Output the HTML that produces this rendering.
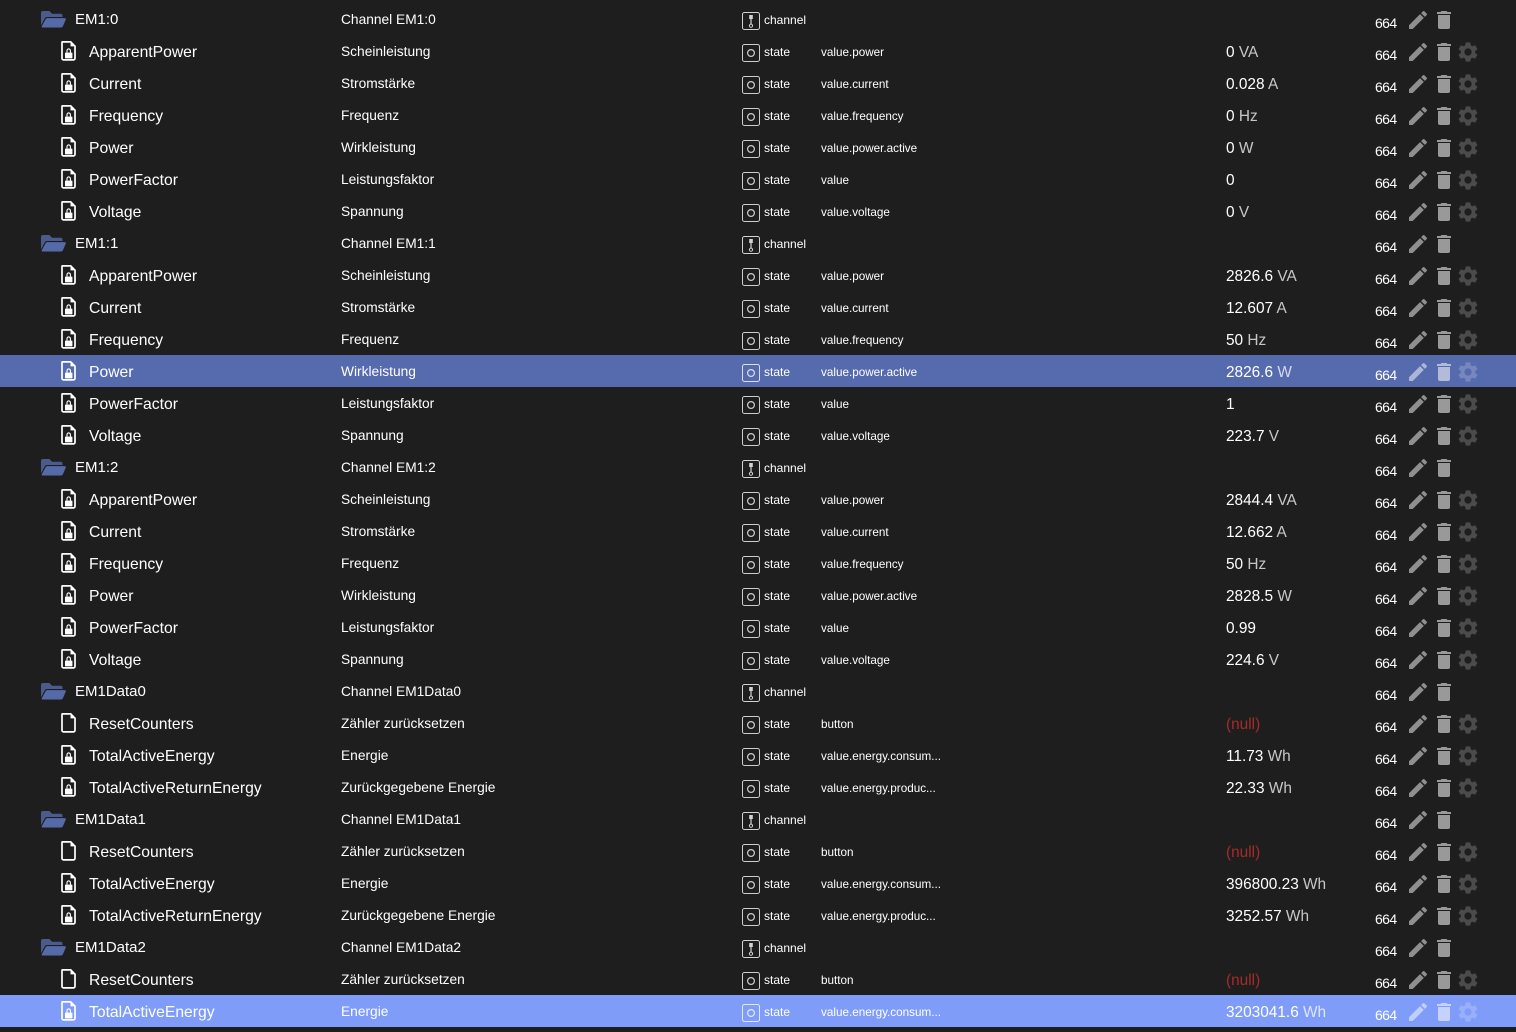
<!DOCTYPE html>
<html><head><meta charset="utf-8"><style>
html,body{margin:0;padding:0;background:#1e1e1e;width:1516px;height:1032px;overflow:hidden}
body{font-family:"Liberation Sans",sans-serif;color:#fff;position:relative}
#w{position:absolute;left:0;top:3px;width:1516px}
.r{position:relative;height:32px;width:1516px}
.r span{position:absolute;white-space:nowrap;line-height:32px;top:0}
.r svg{position:absolute;overflow:visible}
.n{left:89px;font-size:15.7px;top:2px!important}
.c .n{left:75px;font-size:15px;top:1px!important}
.d{left:341px;font-size:13.75px;top:1px!important}
.y{left:764px;font-size:12px;top:1px!important}
.o{left:821px;font-size:11.7px;top:2px!important}
.v{left:1226px;font-size:15.4px;top:2px!important}
.v i{font-style:normal;opacity:.75}
.v.z{color:#a82a2a}
.m{left:1375px;font-size:14px;letter-spacing:-.6px;top:4px!important}
.f{left:59px;top:4px;width:20px;height:22px}
.g{left:41px;top:8px;width:25px;height:16px}
.t{left:742px;top:9px;width:18px;height:18px}
.p{left:1406px;top:5px;width:24px;height:24px}
.x{left:1432px;top:5px;width:24px;height:24px}
.s{left:1456px;top:5px;width:24px;height:24px}
.s1{background:#566aae}
.s2{background:#7f9cf8}
</style></head><body>
<svg width="0" height="0" style="position:absolute"><defs>
<g id="lk" transform="translate(0,.4)"><path d="M3.5 2.5H11.7L16 6.8V19a1.5 1.5 0 0 1-1.5 1.5H4.5A1.5 1.5 0 0 1 3 19V3a.5.5 0 0 1 .5-.5Z" fill="none" stroke="#fff" stroke-width="1.7"/><path d="M11.5 2.5V7H16" fill="#fff"/><rect x="6" y="13.2" width="7.4" height="5.8" rx=".6" fill="#fff"/><path d="M8 13.5V11.2a1.7 1.7 0 0 1 3.4 0V13.5" fill="none" stroke="#fff" stroke-width="1.1"/></g>
<g id="fi" transform="translate(0,.4)"><path d="M3.5 2.5H11.7L16 6.8V19a1.5 1.5 0 0 1-1.5 1.5H4.5A1.5 1.5 0 0 1 3 19V3a.5.5 0 0 1 .5-.5Z" fill="none" stroke="#fff" stroke-width="1.7"/><path d="M11.5 2.5V7H16" fill="#fff"/></g>
<g id="fo" transform="scale(1,1.1)"><path d="M0 13V2Q0 0 2 0H8.5L11 2.5H19.5Q21.5 2.5 21.5 4.5V5.5H6Q4.3 5.5 3.6 7Z" fill="#4a5b90"/><path d="M6.5 6.5H23.5Q25.3 6.5 24.6 8.2L22 13.6Q21.3 15 19.8 15H1.5Q.3 15 .8 13.8L4.4 7.8Q5 6.5 6.5 6.5Z" fill="#566aa8"/></g>
<g id="ch" opacity=".8"><rect x=".5" y=".5" width="17" height="17" rx="2" fill="none" stroke="#fff"/><rect x="7.2" y="3" width="3.6" height="4" fill="#fff"/><rect x="8.4" y="7" width="1.2" height="5" fill="#fff"/><circle cx="9" cy="13.7" r="1.6" fill="none" stroke="#fff"/></g>
<g id="st" opacity=".78"><rect x=".5" y=".5" width="17" height="17" rx="2" fill="none" stroke="#fff"/><circle cx="9" cy="9" r="3.4" fill="none" stroke="#fff" stroke-width="1.2"/></g>
<path id="pe" fill="#fff" d="M20.71,7.04C21.1,6.65 21.1,6 20.71,5.63L18.37,3.29C18,2.9 17.35,2.9 16.96,3.29L15.12,5.12L18.87,8.87M3,17.25V21H6.75L17.81,9.93L14.06,6.18L3,17.25Z"/>
<path id="tr" fill="#fff" d="M19,4H15.5L14.5,3H9.5L8.5,4H5V6H19M6,19A2,2 0 0,0 8,21H16A2,2 0 0,0 18,19V7H6V19Z"/>
<path id="ge" fill="#fff" d="M19.14 12.94c.04-.3.06-.61.06-.94 0-.32-.02-.64-.07-.94l2.03-1.58c.18-.14.23-.41.12-.61l-1.92-3.32c-.12-.22-.37-.29-.59-.22l-2.39.96c-.5-.38-1.03-.7-1.62-.94l-.36-2.54c-.04-.24-.24-.41-.48-.41h-3.84c-.24 0-.43.17-.47.41l-.36 2.54c-.59.24-1.13.57-1.62.94l-2.39-.96c-.22-.08-.47 0-.59.22L2.74 8.87c-.12.21-.08.47.12.61l2.03 1.58c-.05.3-.09.63-.09.94s.02.64.07.94l-2.03 1.58c-.18.14-.23.41-.12.61l1.92 3.32c.12.22.37.29.59.22l2.39-.96c.5.38 1.03.7 1.62.94l.36 2.54c.05.24.24.41.48.41h3.84c.24 0 .44-.17.47-.41l.36-2.54c.59-.24 1.13-.56 1.62-.94l2.39.96c.22.08.47 0 .59-.22l1.92-3.32c.12-.22.07-.47-.12-.61l-2.01-1.58zM12 15.6c-1.98 0-3.6-1.62-3.6-3.6s1.62-3.6 3.6-3.6 3.6 1.62 3.6 3.6-1.62 3.6-3.6 3.6z"/>
</defs></svg>
<div id="w">
<div class="r c"><svg class="g"><use href="#fo"/></svg><span class="n">EM1:0</span><span class="d">Channel EM1:0</span><svg class="t"><use href="#ch"/></svg><span class="y">channel</span><span class="m">664</span><svg class="p" opacity=".5"><use href="#pe"/></svg><svg class="x" opacity=".55"><use href="#tr"/></svg></div>
<div class="r"><svg class="f"><use href="#lk"/></svg><span class="n">ApparentPower</span><span class="d">Scheinleistung</span><svg class="t"><use href="#st"/></svg><span class="y">state</span><span class="o">value.power</span><span class="v">0 <i>VA</i></span><span class="m">664</span><svg class="p" opacity=".5"><use href="#pe"/></svg><svg class="x" opacity=".55"><use href="#tr"/></svg><svg class="s" opacity=".2"><use href="#ge"/></svg></div>
<div class="r"><svg class="f"><use href="#lk"/></svg><span class="n">Current</span><span class="d">Stromstärke</span><svg class="t"><use href="#st"/></svg><span class="y">state</span><span class="o">value.current</span><span class="v">0.028 <i>A</i></span><span class="m">664</span><svg class="p" opacity=".5"><use href="#pe"/></svg><svg class="x" opacity=".55"><use href="#tr"/></svg><svg class="s" opacity=".2"><use href="#ge"/></svg></div>
<div class="r"><svg class="f"><use href="#lk"/></svg><span class="n">Frequency</span><span class="d">Frequenz</span><svg class="t"><use href="#st"/></svg><span class="y">state</span><span class="o">value.frequency</span><span class="v">0 <i>Hz</i></span><span class="m">664</span><svg class="p" opacity=".5"><use href="#pe"/></svg><svg class="x" opacity=".55"><use href="#tr"/></svg><svg class="s" opacity=".2"><use href="#ge"/></svg></div>
<div class="r"><svg class="f"><use href="#lk"/></svg><span class="n">Power</span><span class="d">Wirkleistung</span><svg class="t"><use href="#st"/></svg><span class="y">state</span><span class="o">value.power.active</span><span class="v">0 <i>W</i></span><span class="m">664</span><svg class="p" opacity=".5"><use href="#pe"/></svg><svg class="x" opacity=".55"><use href="#tr"/></svg><svg class="s" opacity=".2"><use href="#ge"/></svg></div>
<div class="r"><svg class="f"><use href="#lk"/></svg><span class="n">PowerFactor</span><span class="d">Leistungsfaktor</span><svg class="t"><use href="#st"/></svg><span class="y">state</span><span class="o">value</span><span class="v">0</span><span class="m">664</span><svg class="p" opacity=".5"><use href="#pe"/></svg><svg class="x" opacity=".55"><use href="#tr"/></svg><svg class="s" opacity=".2"><use href="#ge"/></svg></div>
<div class="r"><svg class="f"><use href="#lk"/></svg><span class="n">Voltage</span><span class="d">Spannung</span><svg class="t"><use href="#st"/></svg><span class="y">state</span><span class="o">value.voltage</span><span class="v">0 <i>V</i></span><span class="m">664</span><svg class="p" opacity=".5"><use href="#pe"/></svg><svg class="x" opacity=".55"><use href="#tr"/></svg><svg class="s" opacity=".2"><use href="#ge"/></svg></div>
<div class="r c"><svg class="g"><use href="#fo"/></svg><span class="n">EM1:1</span><span class="d">Channel EM1:1</span><svg class="t"><use href="#ch"/></svg><span class="y">channel</span><span class="m">664</span><svg class="p" opacity=".5"><use href="#pe"/></svg><svg class="x" opacity=".55"><use href="#tr"/></svg></div>
<div class="r"><svg class="f"><use href="#lk"/></svg><span class="n">ApparentPower</span><span class="d">Scheinleistung</span><svg class="t"><use href="#st"/></svg><span class="y">state</span><span class="o">value.power</span><span class="v">2826.6 <i>VA</i></span><span class="m">664</span><svg class="p" opacity=".5"><use href="#pe"/></svg><svg class="x" opacity=".55"><use href="#tr"/></svg><svg class="s" opacity=".2"><use href="#ge"/></svg></div>
<div class="r"><svg class="f"><use href="#lk"/></svg><span class="n">Current</span><span class="d">Stromstärke</span><svg class="t"><use href="#st"/></svg><span class="y">state</span><span class="o">value.current</span><span class="v">12.607 <i>A</i></span><span class="m">664</span><svg class="p" opacity=".5"><use href="#pe"/></svg><svg class="x" opacity=".55"><use href="#tr"/></svg><svg class="s" opacity=".2"><use href="#ge"/></svg></div>
<div class="r"><svg class="f"><use href="#lk"/></svg><span class="n">Frequency</span><span class="d">Frequenz</span><svg class="t"><use href="#st"/></svg><span class="y">state</span><span class="o">value.frequency</span><span class="v">50 <i>Hz</i></span><span class="m">664</span><svg class="p" opacity=".5"><use href="#pe"/></svg><svg class="x" opacity=".55"><use href="#tr"/></svg><svg class="s" opacity=".2"><use href="#ge"/></svg></div>
<div class="r s1"><svg class="f"><use href="#lk"/></svg><span class="n">Power</span><span class="d">Wirkleistung</span><svg class="t"><use href="#st"/></svg><span class="y">state</span><span class="o">value.power.active</span><span class="v">2826.6 <i>W</i></span><span class="m">664</span><svg class="p" opacity=".5"><use href="#pe"/></svg><svg class="x" opacity=".55"><use href="#tr"/></svg><svg class="s" opacity=".2"><use href="#ge"/></svg></div>
<div class="r"><svg class="f"><use href="#lk"/></svg><span class="n">PowerFactor</span><span class="d">Leistungsfaktor</span><svg class="t"><use href="#st"/></svg><span class="y">state</span><span class="o">value</span><span class="v">1</span><span class="m">664</span><svg class="p" opacity=".5"><use href="#pe"/></svg><svg class="x" opacity=".55"><use href="#tr"/></svg><svg class="s" opacity=".2"><use href="#ge"/></svg></div>
<div class="r"><svg class="f"><use href="#lk"/></svg><span class="n">Voltage</span><span class="d">Spannung</span><svg class="t"><use href="#st"/></svg><span class="y">state</span><span class="o">value.voltage</span><span class="v">223.7 <i>V</i></span><span class="m">664</span><svg class="p" opacity=".5"><use href="#pe"/></svg><svg class="x" opacity=".55"><use href="#tr"/></svg><svg class="s" opacity=".2"><use href="#ge"/></svg></div>
<div class="r c"><svg class="g"><use href="#fo"/></svg><span class="n">EM1:2</span><span class="d">Channel EM1:2</span><svg class="t"><use href="#ch"/></svg><span class="y">channel</span><span class="m">664</span><svg class="p" opacity=".5"><use href="#pe"/></svg><svg class="x" opacity=".55"><use href="#tr"/></svg></div>
<div class="r"><svg class="f"><use href="#lk"/></svg><span class="n">ApparentPower</span><span class="d">Scheinleistung</span><svg class="t"><use href="#st"/></svg><span class="y">state</span><span class="o">value.power</span><span class="v">2844.4 <i>VA</i></span><span class="m">664</span><svg class="p" opacity=".5"><use href="#pe"/></svg><svg class="x" opacity=".55"><use href="#tr"/></svg><svg class="s" opacity=".2"><use href="#ge"/></svg></div>
<div class="r"><svg class="f"><use href="#lk"/></svg><span class="n">Current</span><span class="d">Stromstärke</span><svg class="t"><use href="#st"/></svg><span class="y">state</span><span class="o">value.current</span><span class="v">12.662 <i>A</i></span><span class="m">664</span><svg class="p" opacity=".5"><use href="#pe"/></svg><svg class="x" opacity=".55"><use href="#tr"/></svg><svg class="s" opacity=".2"><use href="#ge"/></svg></div>
<div class="r"><svg class="f"><use href="#lk"/></svg><span class="n">Frequency</span><span class="d">Frequenz</span><svg class="t"><use href="#st"/></svg><span class="y">state</span><span class="o">value.frequency</span><span class="v">50 <i>Hz</i></span><span class="m">664</span><svg class="p" opacity=".5"><use href="#pe"/></svg><svg class="x" opacity=".55"><use href="#tr"/></svg><svg class="s" opacity=".2"><use href="#ge"/></svg></div>
<div class="r"><svg class="f"><use href="#lk"/></svg><span class="n">Power</span><span class="d">Wirkleistung</span><svg class="t"><use href="#st"/></svg><span class="y">state</span><span class="o">value.power.active</span><span class="v">2828.5 <i>W</i></span><span class="m">664</span><svg class="p" opacity=".5"><use href="#pe"/></svg><svg class="x" opacity=".55"><use href="#tr"/></svg><svg class="s" opacity=".2"><use href="#ge"/></svg></div>
<div class="r"><svg class="f"><use href="#lk"/></svg><span class="n">PowerFactor</span><span class="d">Leistungsfaktor</span><svg class="t"><use href="#st"/></svg><span class="y">state</span><span class="o">value</span><span class="v">0.99</span><span class="m">664</span><svg class="p" opacity=".5"><use href="#pe"/></svg><svg class="x" opacity=".55"><use href="#tr"/></svg><svg class="s" opacity=".2"><use href="#ge"/></svg></div>
<div class="r"><svg class="f"><use href="#lk"/></svg><span class="n">Voltage</span><span class="d">Spannung</span><svg class="t"><use href="#st"/></svg><span class="y">state</span><span class="o">value.voltage</span><span class="v">224.6 <i>V</i></span><span class="m">664</span><svg class="p" opacity=".5"><use href="#pe"/></svg><svg class="x" opacity=".55"><use href="#tr"/></svg><svg class="s" opacity=".2"><use href="#ge"/></svg></div>
<div class="r c"><svg class="g"><use href="#fo"/></svg><span class="n">EM1Data0</span><span class="d">Channel EM1Data0</span><svg class="t"><use href="#ch"/></svg><span class="y">channel</span><span class="m">664</span><svg class="p" opacity=".5"><use href="#pe"/></svg><svg class="x" opacity=".55"><use href="#tr"/></svg></div>
<div class="r"><svg class="f"><use href="#fi"/></svg><span class="n">ResetCounters</span><span class="d">Zähler zurücksetzen</span><svg class="t"><use href="#st"/></svg><span class="y">state</span><span class="o">button</span><span class="v z">(null)</span><span class="m">664</span><svg class="p" opacity=".5"><use href="#pe"/></svg><svg class="x" opacity=".55"><use href="#tr"/></svg><svg class="s" opacity=".2"><use href="#ge"/></svg></div>
<div class="r"><svg class="f"><use href="#lk"/></svg><span class="n">TotalActiveEnergy</span><span class="d">Energie</span><svg class="t"><use href="#st"/></svg><span class="y">state</span><span class="o">value.energy.consum...</span><span class="v">11.73 <i>Wh</i></span><span class="m">664</span><svg class="p" opacity=".5"><use href="#pe"/></svg><svg class="x" opacity=".55"><use href="#tr"/></svg><svg class="s" opacity=".2"><use href="#ge"/></svg></div>
<div class="r"><svg class="f"><use href="#lk"/></svg><span class="n">TotalActiveReturnEnergy</span><span class="d">Zurückgegebene Energie</span><svg class="t"><use href="#st"/></svg><span class="y">state</span><span class="o">value.energy.produc...</span><span class="v">22.33 <i>Wh</i></span><span class="m">664</span><svg class="p" opacity=".5"><use href="#pe"/></svg><svg class="x" opacity=".55"><use href="#tr"/></svg><svg class="s" opacity=".2"><use href="#ge"/></svg></div>
<div class="r c"><svg class="g"><use href="#fo"/></svg><span class="n">EM1Data1</span><span class="d">Channel EM1Data1</span><svg class="t"><use href="#ch"/></svg><span class="y">channel</span><span class="m">664</span><svg class="p" opacity=".5"><use href="#pe"/></svg><svg class="x" opacity=".55"><use href="#tr"/></svg></div>
<div class="r"><svg class="f"><use href="#fi"/></svg><span class="n">ResetCounters</span><span class="d">Zähler zurücksetzen</span><svg class="t"><use href="#st"/></svg><span class="y">state</span><span class="o">button</span><span class="v z">(null)</span><span class="m">664</span><svg class="p" opacity=".5"><use href="#pe"/></svg><svg class="x" opacity=".55"><use href="#tr"/></svg><svg class="s" opacity=".2"><use href="#ge"/></svg></div>
<div class="r"><svg class="f"><use href="#lk"/></svg><span class="n">TotalActiveEnergy</span><span class="d">Energie</span><svg class="t"><use href="#st"/></svg><span class="y">state</span><span class="o">value.energy.consum...</span><span class="v">396800.23 <i>Wh</i></span><span class="m">664</span><svg class="p" opacity=".5"><use href="#pe"/></svg><svg class="x" opacity=".55"><use href="#tr"/></svg><svg class="s" opacity=".2"><use href="#ge"/></svg></div>
<div class="r"><svg class="f"><use href="#lk"/></svg><span class="n">TotalActiveReturnEnergy</span><span class="d">Zurückgegebene Energie</span><svg class="t"><use href="#st"/></svg><span class="y">state</span><span class="o">value.energy.produc...</span><span class="v">3252.57 <i>Wh</i></span><span class="m">664</span><svg class="p" opacity=".5"><use href="#pe"/></svg><svg class="x" opacity=".55"><use href="#tr"/></svg><svg class="s" opacity=".2"><use href="#ge"/></svg></div>
<div class="r c"><svg class="g"><use href="#fo"/></svg><span class="n">EM1Data2</span><span class="d">Channel EM1Data2</span><svg class="t"><use href="#ch"/></svg><span class="y">channel</span><span class="m">664</span><svg class="p" opacity=".5"><use href="#pe"/></svg><svg class="x" opacity=".55"><use href="#tr"/></svg></div>
<div class="r"><svg class="f"><use href="#fi"/></svg><span class="n">ResetCounters</span><span class="d">Zähler zurücksetzen</span><svg class="t"><use href="#st"/></svg><span class="y">state</span><span class="o">button</span><span class="v z">(null)</span><span class="m">664</span><svg class="p" opacity=".5"><use href="#pe"/></svg><svg class="x" opacity=".55"><use href="#tr"/></svg><svg class="s" opacity=".2"><use href="#ge"/></svg></div>
<div class="r s2"><svg class="f"><use href="#lk"/></svg><span class="n">TotalActiveEnergy</span><span class="d">Energie</span><svg class="t"><use href="#st"/></svg><span class="y">state</span><span class="o">value.energy.consum...</span><span class="v">3203041.6 <i>Wh</i></span><span class="m">664</span><svg class="p" opacity=".5"><use href="#pe"/></svg><svg class="x" opacity=".55"><use href="#tr"/></svg><svg class="s" opacity=".2"><use href="#ge"/></svg></div>
</div>
</body></html>
